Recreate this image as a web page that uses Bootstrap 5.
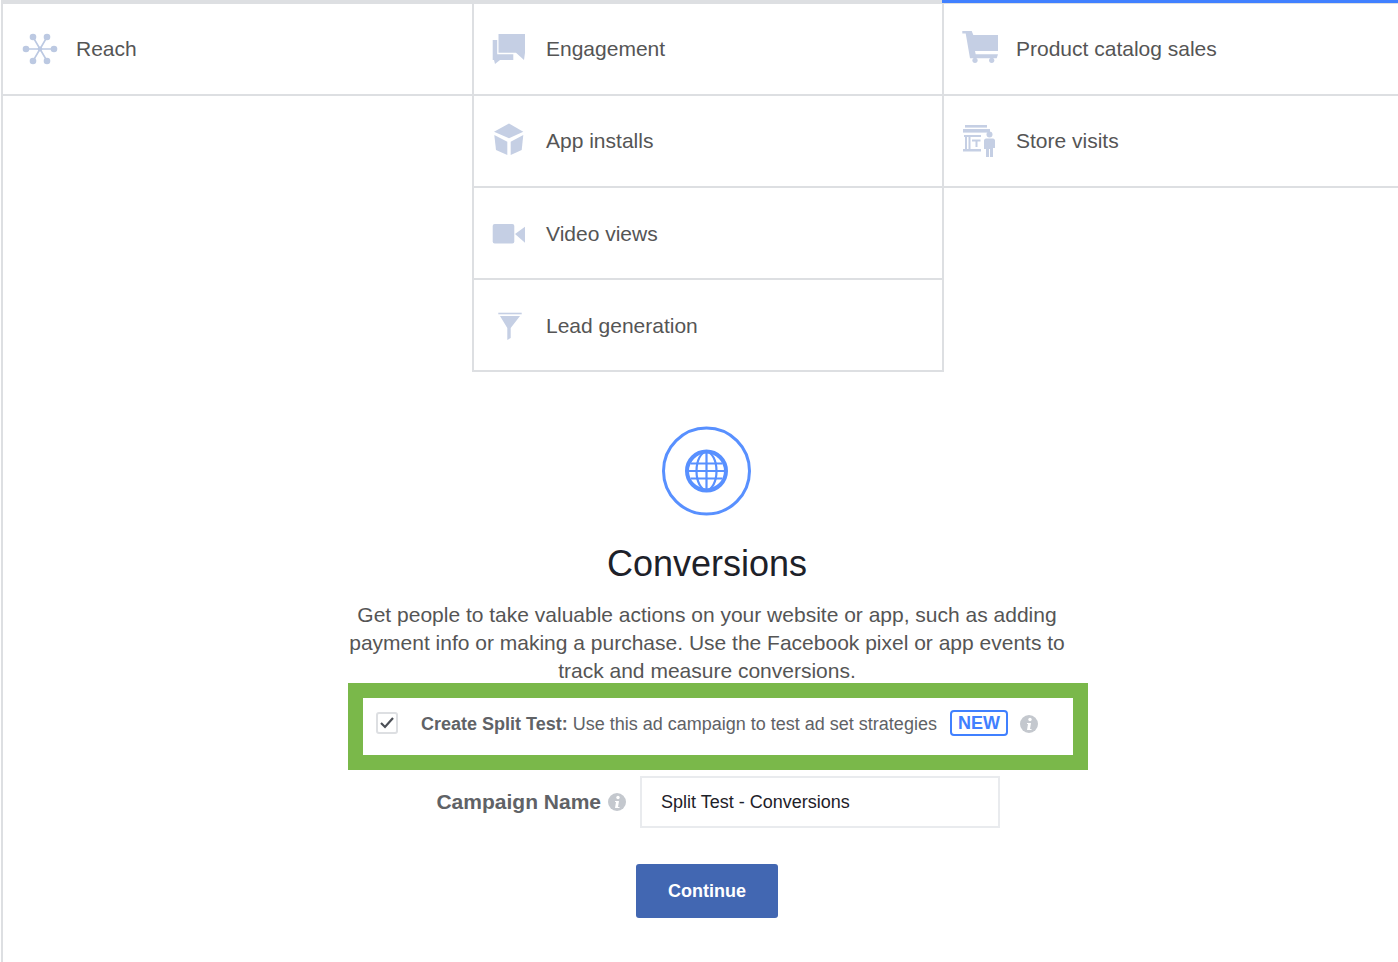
<!DOCTYPE html>
<html lang="en">
<head>
  <meta charset="UTF-8">
  <title>Campaign objective</title>
  <link href="https://cdn.jsdelivr.net/npm/bootstrap@5.3.3/dist/css/bootstrap.min.css" rel="stylesheet">
  <style>
    body {
      background: #fff;
      font-family: "Liberation Sans", Arial, sans-serif;
      color: #4b4f56;
      overflow: hidden;
    }
    .page-wrap {
      height: 962px;
      margin-left: 1px;
      border-left: 2px solid #dddfe2;
    }
    .top-strip {
      height: 4px;
      background: #dddfe2;
    }
    .strip-blue {
      margin-left: 939px;
      height: 3px;
      background: #4080ff;
    }
    .obj-col-a { width: 469px; }
    .obj-col-b {
      width: 472px;
      border-left: 2px solid #dddfe2;
      border-right: 2px solid #dddfe2;
    }
    .obj-col-c { flex: 1; }
    .obj-item {
      height: 92px;
      border-bottom: 2px solid #dddfe2;
      font-size: 21px;
      color: #555;
    }
    .obj-col-b .obj-item:nth-child(n+3) { padding-top: 2px; }
    .obj-icon {
      width: 36px;
      height: 36px;
      margin-left: 18px;
      margin-right: 18px;
      flex: none;
    }
    .obj-col-a .obj-icon { margin-left: 19px; }
    .goal-block {
      width: 740px;
      margin-left: 345px;
    }
    .goal-center {
      width: 718px;
      text-align: center;
    }
    .goal-ring {
      display: block;
      margin: 54px auto 0 auto;
      width: 90px;
      height: 90px;
    }
    .goal-title {
      font-size: 36px;
      line-height: 44px;
      color: #1d2129;
      margin: 26px 0 15px 0;
      font-weight: 400;
    }
    .goal-text {
      font-size: 21px;
      line-height: 28px;
      color: #555;
      margin: 0;
    }
    .split-box {
      border: 15px solid #7ab84a;
      height: 87px;
      margin-top: -2px;
      padding-bottom: 5px;
      font-size: 18px;
      color: #606266;
    }
    .fake-check {
      width: 22px;
      height: 22px;
      border: 2px solid #dddfe2;
      border-radius: 3px;
      margin-left: 13px;
      margin-right: 23px;
      margin-bottom: 3px;
    }
    .new-tag {
      border: 2px solid #4080ff;
      border-radius: 4px;
      color: #4080ff;
      font-weight: 700;
      font-size: 18px;
      line-height: 22px;
      padding: 0 6px;
      margin-left: 13px;
      margin-right: 12px;
      margin-bottom: 2px;
    }
    .info-dot {
      width: 18px;
      height: 18px;
      flex: none;
    }
    .name-row {
      margin-top: 6px;
      height: 52px;
    }
    .name-label {
      width: 278px;
      font-size: 21px;
      font-weight: 700;
      color: #606266;
      gap: 7px;
    }
    .name-input {
      width: 360px;
      height: 52px;
      margin-left: 14px;
      border: 2px solid #e9ebee;
      border-radius: 0;
      font-size: 18px;
      color: #1d2129;
      padding: 0 19px;
    }
    .go-btn {
      display: block;
      width: 142px;
      height: 54px;
      margin: 36px 0 0 288px;
      background: #4267b2;
      border: 0;
      border-radius: 3px;
      color: #fff;
      font-weight: 700;
      font-size: 18px;
    }
  </style>
</head>
<body>
  <div class="page-wrap">
    <div class="top-strip"><div class="strip-blue"></div></div>

    <div class="d-flex align-items-start">
      <div class="obj-col-a">
        <div class="obj-item d-flex align-items-center">
          <svg class="obj-icon" viewBox="0 0 36 36" fill="#bcc9e2" stroke="#bcc9e2" stroke-width="1.6">
            <path d="M4 18H32M11 6L25 30M25 6L11 30" fill="none"/>
            <circle cx="18" cy="18" r="1.6"/>
            <g stroke="none">
              <circle cx="4" cy="18" r="3.3"/><circle cx="32" cy="18" r="3.3"/>
              <circle cx="11" cy="6" r="3.3"/><circle cx="25" cy="6" r="3.3"/>
              <circle cx="11" cy="30" r="3.3"/><circle cx="25" cy="30" r="3.3"/>
            </g>
          </svg>
          <span>Reach</span>
        </div>
      </div>

      <div class="obj-col-b">
        <div class="obj-item d-flex align-items-center">
          <svg class="obj-icon" viewBox="0 0 36 36" fill="#c5cfe4">
            <path d="M6.5 3H33V21.7L32 29L24 21.7H6.5Z"/>
            <path d="M.7 9H5.2V23.3H21.3V29H8L3 33L2 29H.7Z"/>
          </svg>
          <span>Engagement</span>
        </div>
        <div class="obj-item d-flex align-items-center">
          <svg class="obj-icon" viewBox="0 0 36 36" fill="#c5cfe4">
            <path d="M17 .5L31.3 8.7L17 15.3L2 8.7Z"/>
            <path d="M2.3 12L15.3 18.7V32L4 27Z"/>
            <path d="M31.3 12L18.7 18.7V32L29.7 27Z"/>
          </svg>
          <span>App installs</span>
        </div>
        <div class="obj-item d-flex align-items-center">
          <svg class="obj-icon" viewBox="0 0 36 36" fill="#c5cfe4">
            <rect x=".7" y="8" width="21.6" height="19.4" rx="2"/>
            <path d="M33 10.7V26.7L23 18Z"/>
          </svg>
          <span>Video views</span>
        </div>
        <div class="obj-item d-flex align-items-center">
          <svg class="obj-icon" viewBox="0 0 36 36" fill="#c5cfe4">
            <rect x="6.3" y="4.7" width="23.4" height="1.6"/>
            <path d="M8 8H28L18.7 20V30L15.3 32V20Z"/>
          </svg>
          <span>Lead generation</span>
        </div>
      </div>

      <div class="obj-col-c">
        <div class="obj-item d-flex align-items-center">
          <svg class="obj-icon" viewBox="0 0 36 36" fill="#c5cfe4">
            <path d="M.3 0H9.7L11.3 4H36V20H13L13.7 23.3H36L34.7 27.3H8L3.7 2.5H.3Z"/>
            <circle cx="13" cy="29.3" r="2.6"/><circle cx="29.7" cy="29.3" r="2.6"/>
          </svg>
          <span>Product catalog sales</span>
        </div>
        <div class="obj-item d-flex align-items-center">
          <svg class="obj-icon" viewBox="0 0 36 36" fill="#c5cfe4">
            <rect x="3" y="2" width="22" height="2.6"/>
            <rect x="1" y="6" width="27" height="3.6"/>
            <path d="M2 12H19V14H8.5V26H19V28.5H1V26H3V14H2ZM5 14V26H6.5V14Z"/>
            <path d="M10 16.5H18.5V18.5H15.5V24H13.5V18.5H10Z"/>
            <circle cx="27.5" cy="11.5" r="3"/>
            <path d="M24 15.5H31C32 15.5 33 16.5 33 17.5V25H31V34H28V26H27V34H24V26H22V17.5C22 16.5 23 15.5 24 15.5Z"/>
          </svg>
          <span>Store visits</span>
        </div>
      </div>
    </div>

    <div class="goal-block">
      <div class="goal-center">
        <svg class="goal-ring" viewBox=".5 0 90 90" fill="none" stroke="#5890ff">
          <circle cx="45" cy="45" r="43" stroke-width="3"/>
          <circle cx="45" cy="45" r="19.5" stroke-width="4"/>
          <g stroke-width="2.2">
            <ellipse cx="45" cy="45" rx="10" ry="19"/>
            <path d="M45 26V64M26 45H64M29 37.5H61M29 52.5H61"/>
          </g>
        </svg>
        <h1 class="goal-title">Conversions</h1>
        <p class="goal-text">Get people to take valuable actions on your website or app, such as adding payment info or making a purchase. Use the Facebook pixel or app events to track and measure conversions.</p>
      </div>

      <div class="split-box d-flex align-items-center">
        <div class="fake-check d-flex align-items-center justify-content-center">
          <svg width="14" height="12" viewBox="0 0 14 12" fill="none" stroke="#4b4f56" stroke-width="2.2"><path d="M1 6L5 10L13 1"/></svg>
        </div>
        <span><b>Create Split Test:</b> Use this ad campaign to test ad set strategies</span>
        <span class="new-tag">NEW</span>
        <svg class="info-dot" viewBox="0 0 18 18">
          <circle cx="9" cy="9" r="9" fill="#c4c8ce"/>
          <circle cx="10" cy="4.5" r="1.7" fill="#fff"/>
          <path d="M7 8H11L10 14H11.5V15H7L8 9H7Z" fill="#fff"/>
        </svg>
      </div>

      <div class="name-row d-flex align-items-center">
        <div class="name-label d-flex align-items-center justify-content-end">
          <span>Campaign Name</span>
          <svg class="info-dot" viewBox="0 0 18 18">
            <circle cx="9" cy="9" r="9" fill="#c4c8ce"/>
            <circle cx="10" cy="4.5" r="1.7" fill="#fff"/>
            <path d="M7 8H11L10 14H11.5V15H7L8 9H7Z" fill="#fff"/>
          </svg>
        </div>
        <input class="form-control name-input" type="text" value="Split Test - Conversions">
      </div>

      <button class="btn go-btn" type="button">Continue</button>
    </div>
  </div>
</body>
</html>
